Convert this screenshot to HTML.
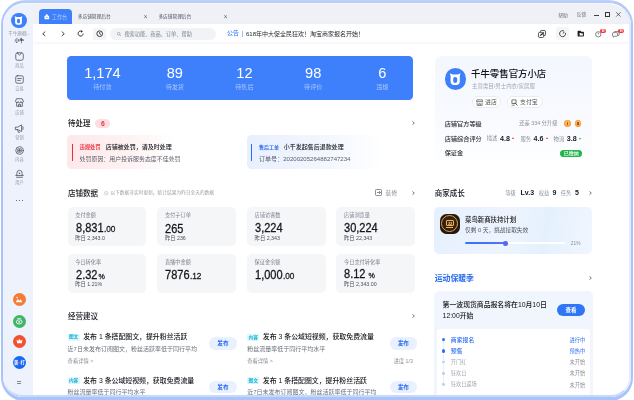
<!DOCTYPE html>
<html lang="zh-CN">
<head>
<meta charset="utf-8">
<title>千牛工作台</title>
<style>
*{box-sizing:border-box;margin:0;padding:0}
html,body{width:634px;height:400px;overflow:hidden;background:#fff}
body{font-family:"Liberation Sans","Noto Sans CJK SC",sans-serif;color:#1f2329;position:relative}
#frame{position:absolute;left:1px;top:0.3px;width:631.9px;height:401.2px;background:linear-gradient(180deg,#c0d6fd 0,#b4c9f8 3px,#abc5fb 40px,#a9c3fb 100%);border-radius:24.5px 24.5px 23px 23px}
#win{position:absolute;left:2.8px;top:2.8px;width:627.8px;height:394.2px;background:#fff;border-radius:22px 22px 20px 20px;overflow:hidden}
#pg{position:absolute;left:-2.8px;top:-2.8px;width:634px;height:400px;will-change:transform}
#glow{position:absolute;left:0;top:0;width:627.8px;height:394.2px;border-radius:22px 22px 20px 20px;border-right:2.8px solid #e4ecfd;border-bottom:2.2px solid #c6d8fc;border-top:1.2px solid rgba(255,255,255,.55);pointer-events:none}
#pg>*{position:absolute;white-space:nowrap}
.t{line-height:1;transform:translateY(-50%)}
.c{transform:translate(-50%,-50%)}
.r{transform:translate(-100%,-50%)}
svg{overflow:visible}
</style>
</head>
<body>
<div id="frame"></div>
<div id="win">
<div id="pg">
<div style="left:0px;top:0px;width:634px;height:23.8px;background:#eff1f6;"></div>
<div style="left:33px;top:23.8px;width:601px;height:18.6px;background:#fff;box-shadow:0 1.2px 3px rgba(40,60,110,.09)"></div>
<div style="left:0px;top:0px;width:33px;height:400px;background:#edf2fd;"></div>
<div style="left:11.4px;top:12.6px;width:15.6px;height:15.6px;border-radius:7.8px;background:#3e80fc;"></div>
<svg style="left:11.4px;top:13.2px" width="15.6" height="15.6" viewBox="0 0 21.2 21.2"><path d="M4.9 4.3 L7.6 5.6 H12.8 L15.500 4.300 L14.800 7 V12.600 A3.400 3.400 0 0 1 11.400 16 H9 A3.400 3.400 0 0 1 5.600 12.600 V7 Z" fill="#fff"/><rect x="8.200" y="7.900" width="4" height="6" rx="1.800" fill="#3e80fc"/></svg>
<div class="t c" style="left:19.3px;top:34.02px;font-size:4.7px;color:#8f95a2">千牛旗舰...</div>
<div class="t c" style="left:19.3px;top:41.1px;font-size:4.9px;color:#222;font-weight:500">小牛</div>
<div style="left:38.9px;top:9.1px;width:33.5px;height:14.7px;background:#3e80fc;border-radius:4px 4px 0 0"></div>
<svg style="left:43.6px;top:13.6px" width="5.6" height="6" viewBox="0 0 12 12"><path d="M3.6 3.4 V2.6 A2.4 2.4 0 0 1 8.4 2.6 V3.4 H10 A1 1 0 0 1 11 4.4 V10 A1 1 0 0 1 10 11 H2 A1 1 0 0 1 1 10 V4.4 A1 1 0 0 1 2 3.4 Z" fill="#fff"/><circle cx="6" cy="6.6" r="1.3" fill="#3e80fc"/></svg>
<div class="t" style="left:51.7px;top:17.79px;font-size:5.2px;color:#a9c5fb">工作台</div>
<div class="t" style="left:77.8px;top:16.7px;font-size:4.7px;color:#4a4f59">多店铺管理后台</div>
<div class="t c" style="left:145.5px;top:16.6px;font-size:6.4px;color:#666">×</div>
<div class="t" style="left:158.4px;top:16.7px;font-size:4.7px;color:#4a4f59">多店铺管理后台</div>
<div class="t c" style="left:225.7px;top:16.6px;font-size:6.4px;color:#666">×</div>
<div class="t c" style="left:563px;top:15.55px;font-size:4.8px;color:#6a6e77">帮助</div>
<div class="t c" style="left:581.5px;top:15.0px;font-size:4.8px;color:#6a6e77">反馈</div>
<div style="left:594.2px;top:14.6px;width:4.8px;height:0.65px;background:#444;"></div>
<div style="left:605.2px;top:12.2px;width:4.4px;height:4.9px;border:0.7px solid #333;border-radius:0.6px"></div>
<svg style="left:616.2px;top:12.3px" width="4.8" height="4.8" viewBox="0 0 10 10"><path d="M0.5 0.5 L9.5 9.5 M9.5 0.5 L0.5 9.5" stroke="#333" stroke-width="1.5" fill="none"/></svg>
<svg style="left:42.4px;top:30.8px" width="4" height="5.6" viewBox="0 0 8 11"><path d="M6.5 1 L1.5 5.5 L6.5 10" stroke="#222" stroke-width="1.7" fill="none"/></svg>
<svg style="left:61.2px;top:30.8px" width="4" height="5.6" viewBox="0 0 8 11"><path d="M1.5 1 L6.5 5.5 L1.5 10" stroke="#222" stroke-width="1.7" fill="none"/></svg>
<svg style="left:77.2px;top:29.9px" width="7.2" height="7.2" viewBox="0 0 12 12"><path d="M10.2 6 A4.2 4.2 0 1 1 8.2 2.4" stroke="#222" stroke-width="1.5" fill="none"/><path d="M6.6 0.4 L9.8 2.2 L7.2 4.4 Z" fill="#222"/></svg>
<div style="left:93.1px;top:27.6px;width:12.6px;height:12.6px;border-radius:2.5px;background:#f3f4f7;"></div>
<svg style="left:95.7px;top:30.2px" width="7.4" height="7.4" viewBox="0 0 12 12"><circle cx="6" cy="6" r="4.6" stroke="#222" stroke-width="1.4" fill="none"/><path d="M6 3.2 V6.2 L8 7.4" stroke="#222" stroke-width="1.3" fill="none"/></svg>
<div style="left:110px;top:27.6px;width:105.8px;height:12.4px;border-radius:6.2px;background:#f2f3f7;"></div>
<svg style="left:116.6px;top:31.6px" width="4.2" height="4.2" viewBox="0 0 10 10"><circle cx="4.2" cy="4.2" r="3.2" stroke="#777" stroke-width="1.2" fill="none"/><path d="M6.6 6.6 L9.4 9.4" stroke="#777" stroke-width="1.2"/></svg>
<div class="t" style="left:124.4px;top:34.69px;font-size:5.2px;color:#7c818c">搜索功能、商品、订单、帮助</div>
<div class="t" style="left:227px;top:33.04px;font-size:6px;color:#3e80fc;font-weight:500">公告</div>
<div style="left:242.4px;top:31px;width:0.7px;height:5.6px;background:#9bbcf8;"></div>
<div class="t" style="left:246px;top:33.6px;font-size:6px;color:#1f2329">618年中大促全民狂欢！淘宝商家报名开始！</div>
<svg style="left:537.9px;top:29.8px" width="8" height="8" viewBox="0 0 16 16"><rect x="4.6" y="0.9" width="10.5" height="10.5" rx="2.8" stroke="#222" stroke-width="1.5" fill="none"/><rect x="0.9" y="4.6" width="10.5" height="10.5" rx="2.8" stroke="#222" stroke-width="1.5" fill="#fff"/><path d="M3.4 12.4 L5.4 8.6 L12.6 3.4 L9 9.6 Z" fill="#222"/></svg>
<div style="left:555.9px;top:27.4px;width:12.8px;height:12.8px;border-radius:2.5px;background:#f4f5f7;"></div>
<svg style="left:558.8px;top:30.3px" width="7.2" height="7.2" viewBox="0 0 12 12"><path d="M8.4 1.7 A5 5 0 1 0 10.9 5" stroke="#222" stroke-width="1.4" fill="none"/><path d="M6.4 5.6 L9.2 3.6" stroke="#222" stroke-width="1.5"/></svg>
<svg style="left:576.8px;top:29.9px" width="7.4" height="7.2" viewBox="0 0 13 12"><path d="M1 2 A1.2 1.2 0 0 1 2.2 0.8 H6 L7.6 2.6 H11 A1.2 1.2 0 0 1 12.2 3.8 V10 A1.2 1.2 0 0 1 11 11.2 H2.2 A1.2 1.2 0 0 1 1 10 Z" fill="#222"/><path d="M4.6 4.8 H6.6 L7.6 5.8 H10.4 V9.400 H4.6 Z" fill="#fff"/></svg>
<svg style="left:595px;top:30.8px" width="6.6" height="6.6" viewBox="0 0 12 12"><circle cx="6" cy="6" r="4.8" stroke="#444" stroke-width="1.2" fill="none"/><path d="M6 3 V6.400" stroke="#444" stroke-width="1.2"/></svg>
<div style="left:600.2px;top:29px;width:5.8px;height:3.8px;border-radius:1.9px;background:#f0323c;"></div>
<div class="t c" style="left:603.1px;top:32.28px;font-size:2.6px;color:#fff;font-weight:700">99</div>
<svg style="left:612.4px;top:30.8px" width="7.6" height="6.6" viewBox="0 0 14 12"><path d="M4 1 H12 A1.2 1.2 0 0 1 13.2 2.2 V7 A1.2 1.2 0 0 1 12 8.2 H11" stroke="#444" stroke-width="1.2" fill="none"/><path d="M1 4.2 A1.2 1.2 0 0 1 2.2 3 H9 A1.2 1.2 0 0 1 10.2 4.2 V8.4 A1.2 1.2 0 0 1 9 9.6 H4.6 L2.6 11.4 V9.6 H2.2 A1.2 1.2 0 0 1 1 8.4 Z" stroke="#444" stroke-width="1.2" fill="none"/></svg>
<div style="left:618.4px;top:29px;width:5.8px;height:3.8px;border-radius:1.9px;background:#f0323c;"></div>
<div class="t c" style="left:621.3px;top:32.28px;font-size:2.6px;color:#fff;font-weight:700">99</div>
<div style="left:67.1px;top:55.7px;width:346px;height:44px;border-radius:4.3px;background:#3e80fc;"></div>
<div class="t c" style="left:102.4px;top:73.2px;font-size:14.6px;color:#fff">1,174</div>
<div class="t c" style="left:102.4px;top:87.2px;font-size:6.1px;color:#a9c6fb">待付款</div>
<div class="t c" style="left:174.8px;top:73.2px;font-size:14.6px;color:#fff">89</div>
<div class="t c" style="left:174.8px;top:87.2px;font-size:6.1px;color:#a9c6fb">待发货</div>
<div class="t c" style="left:244.4px;top:73.2px;font-size:14.6px;color:#fff">12</div>
<div class="t c" style="left:244.4px;top:87.2px;font-size:6.1px;color:#a9c6fb">待售后</div>
<div class="t c" style="left:313.2px;top:73.2px;font-size:14.6px;color:#fff">98</div>
<div class="t c" style="left:313.2px;top:87.2px;font-size:6.1px;color:#a9c6fb">待评价</div>
<div class="t c" style="left:382.3px;top:73.2px;font-size:14.6px;color:#fff">6</div>
<div class="t c" style="left:382.3px;top:87.2px;font-size:6.1px;color:#a9c6fb">违规</div>
<div class="t" style="left:68px;top:124.32px;font-size:7.5px;color:#15181d;font-weight:500">待处理</div>
<div style="left:95.4px;top:119px;width:14.8px;height:8.8px;border-radius:4.4px;background:#fddde2;"></div>
<div class="t c" style="left:102.8px;top:123.5px;font-size:6.8px;color:#e8323f;font-weight:700">6</div>
<svg style="left:411.6px;top:121.1px" width="2.8" height="4.2" viewBox="0 0 6 9"><path d="M1 1 L5 4.5 L1 8" stroke="#333" stroke-width="1.4" fill="none"/></svg>
<div style="left:67.2px;top:135.4px;width:168.4px;height:34px;border-radius:4.5px;background:linear-gradient(90deg,#fde8ea 0%,#fef2f3 36%,#ffffff 64%);"></div>
<div style="left:72.1px;top:144.2px;width:1.2px;height:16.8px;background:#ee2d3a;"></div>
<div class="t" style="left:79.6px;top:148.39px;font-size:5.25px;color:#ee3a45;font-weight:700">违规处罚</div>
<div class="t" style="left:105.8px;top:147.2px;font-size:6px;color:#15181d;font-weight:500">店铺被处罚，请及时处理</div>
<div class="t" style="left:79.6px;top:160.46px;font-size:5.95px;color:#5b606b">处罚原因：用户投诉服务态度不佳处罚</div>
<div style="left:246.6px;top:135.4px;width:166.8px;height:34px;border-radius:4.5px;background:linear-gradient(90deg,#e8effe 0%,#f2f6fe 45%,#ffffff 82%);"></div>
<div style="left:251.1px;top:144.2px;width:1.2px;height:16.8px;background:#2f6ff2;"></div>
<div class="t" style="left:259px;top:147.2px;font-size:5px;color:#2f6ff2;font-weight:700">售后工单</div>
<div class="t" style="left:283.8px;top:147.2px;font-size:6px;color:#15181d;font-weight:500">小千发起售后退款处理</div>
<div class="t" style="left:259px;top:159.2px;font-size:6.05px;color:#5b606b">订单号：20200205264882747234</div>
<div class="t" style="left:68px;top:193.89px;font-size:7.5px;color:#15181d;font-weight:500">店铺数据</div>
<svg style="left:104.2px;top:190.6px" width="4.4" height="4.4" viewBox="0 0 10 10"><circle cx="5" cy="5" r="4" stroke="#9a9fa8" stroke-width="0.9" fill="none"/><path d="M5 4.4 V7.4 M5 2.6 V3.4" stroke="#9a9fa8" stroke-width="0.9"/></svg>
<div class="t" style="left:110.4px;top:192.9px;font-size:4.73px;color:#9a9fa8">以下数据非实时更新，统计结果为昨日全天的数据</div>
<div style="left:375.4px;top:189.2px;width:7px;height:7px;border:0.7px solid #8a8f99;border-radius:1.2px"></div>
<div style="left:377.2px;top:192.35px;width:3.4px;height:0.7px;background:#8a8f99;"></div>
<div style="left:378.55px;top:191px;width:0.7px;height:3.4px;background:#8a8f99;"></div>
<div class="t" style="left:385.6px;top:193.59px;font-size:5.8px;color:#8a8f99">装修</div>
<svg style="left:411.6px;top:190.7px" width="2.8" height="4.2" viewBox="0 0 6 9"><path d="M1 1 L5 4.5 L1 8" stroke="#333" stroke-width="1.4" fill="none"/></svg>
<div style="left:67.6px;top:207px;width:78.6px;height:39.3px;border-radius:5px;background:#f5f6f8;"></div>
<div class="t" style="left:75.2px;top:215.5px;font-size:5.2px;color:#7a7f8a">支付金额</div>
<div class="t" style="left:75.5px;top:228.2px;font-size:12.4px;color:#15181d;-webkit-text-stroke:0.3px #15181d;transform:translateY(-50%) scaleX(.89);transform-origin:0 50%">8,831<span style="font-size:9.3px;margin-left:0.4px;color:#20242b">.00</span></div>
<div class="t" style="left:75.2px;top:238.86px;font-size:5.3px;color:#4a4f59">昨日 2,343.0</div>
<div style="left:157.3px;top:207px;width:78.6px;height:39.3px;border-radius:5px;background:#f5f6f8;"></div>
<div class="t" style="left:164.9px;top:215.5px;font-size:5.2px;color:#7a7f8a">支付子订单</div>
<div class="t" style="left:165.2px;top:228.83px;font-size:12.4px;color:#15181d;-webkit-text-stroke:0.3px #15181d;transform:translateY(-50%) scaleX(.89);transform-origin:0 50%">265</div>
<div class="t" style="left:164.9px;top:238.94px;font-size:5.3px;color:#4a4f59">昨日 236</div>
<div style="left:247px;top:207px;width:78.6px;height:39.3px;border-radius:5px;background:#f5f6f8;"></div>
<div class="t" style="left:254.6px;top:215.5px;font-size:5.2px;color:#7a7f8a">店铺访客数</div>
<div class="t" style="left:254.9px;top:228.2px;font-size:12.4px;color:#15181d;-webkit-text-stroke:0.3px #15181d;transform:translateY(-50%) scaleX(.89);transform-origin:0 50%">3,224</div>
<div class="t" style="left:254.6px;top:238.88px;font-size:5.3px;color:#4a4f59">昨日 2,343</div>
<div style="left:336.4px;top:207px;width:78.6px;height:39.3px;border-radius:5px;background:#f5f6f8;"></div>
<div class="t" style="left:344.0px;top:215.5px;font-size:5.2px;color:#7a7f8a">店铺浏览量</div>
<div class="t" style="left:344.3px;top:228.2px;font-size:12.4px;color:#15181d;-webkit-text-stroke:0.3px #15181d;transform:translateY(-50%) scaleX(.89);transform-origin:0 50%">30,224</div>
<div class="t" style="left:344.0px;top:238.86px;font-size:5.3px;color:#4a4f59">昨日 22,343</div>
<div style="left:67.6px;top:253.5px;width:78.6px;height:39.3px;border-radius:5px;background:#f5f6f8;"></div>
<div class="t" style="left:75.2px;top:263.0px;font-size:5.2px;color:#7a7f8a">今日转化率</div>
<div class="t" style="left:75.5px;top:274.7px;font-size:12.4px;color:#15181d;-webkit-text-stroke:0.3px #15181d;transform:translateY(-50%) scaleX(.89);transform-origin:0 50%">2.32<span style="font-size:8px;margin-left:1.2px;color:#20242b">%</span></div>
<div class="t" style="left:75.2px;top:285.42px;font-size:5.3px;color:#4a4f59">昨日 1.21%</div>
<div style="left:157.3px;top:253.5px;width:78.6px;height:39.3px;border-radius:5px;background:#f5f6f8;"></div>
<div class="t" style="left:164.9px;top:263.01px;font-size:5.2px;color:#7a7f8a">直播中金额</div>
<div class="t" style="left:165.2px;top:275.1px;font-size:12.4px;color:#15181d;-webkit-text-stroke:0.3px #15181d;transform:translateY(-50%) scaleX(.89);transform-origin:0 50%">7876<span style="font-size:9.3px;margin-left:0.4px;color:#20242b">.12</span></div>
<div style="left:247px;top:253.5px;width:78.6px;height:39.3px;border-radius:5px;background:#f5f6f8;"></div>
<div class="t" style="left:254.6px;top:262.88px;font-size:5.2px;color:#7a7f8a">保证金余额</div>
<div class="t" style="left:254.9px;top:275.1px;font-size:12.4px;color:#15181d;-webkit-text-stroke:0.3px #15181d;transform:translateY(-50%) scaleX(.89);transform-origin:0 50%">1,000<span style="font-size:9.3px;margin-left:0.4px;color:#20242b">.00</span></div>
<div style="left:336.4px;top:253.5px;width:78.6px;height:39.3px;border-radius:5px;background:#f5f6f8;"></div>
<div class="t" style="left:344.0px;top:263.0px;font-size:5.2px;color:#7a7f8a">今日支付转化率</div>
<div class="t" style="left:344.3px;top:274.16px;font-size:12.4px;color:#15181d;-webkit-text-stroke:0.3px #15181d;transform:translateY(-50%) scaleX(.89);transform-origin:0 50%">8.12<span style="font-size:8px;margin-left:3.4px;color:#20242b">%</span></div>
<div class="t" style="left:344.0px;top:285.42px;font-size:5.3px;color:#4a4f59">昨日 2,343.00</div>
<div class="t" style="left:68px;top:316.5px;font-size:7.5px;color:#15181d;font-weight:500">经营建议</div>
<svg style="left:411.6px;top:314.4px" width="2.8" height="4.2" viewBox="0 0 6 9"><path d="M1 1 L5 4.5 L1 8" stroke="#333" stroke-width="1.4" fill="none"/></svg>
<div style="left:67.6px;top:333.5px;width:12px;height:7px;border-radius:1px;background:#dff6fb;"></div>
<div class="t c" style="left:73.6px;top:337.1px;font-size:4.7px;color:#19b5d8;font-weight:700">图文</div>
<div class="t" style="left:83.2px;top:337.0px;font-size:6.9px;color:#15181d;font-weight:500">发布 1 条搭配图文，提升粉丝活跃</div>
<div class="t" style="left:67.6px;top:349.2px;font-size:6px;color:#6b707b">近7日未发布订阅图文，粉丝活跃率低于同行平均</div>
<div class="t" style="left:67.6px;top:362.01px;font-size:5.3px;color:#8a8f99">查看详情 &gt;</div>
<div style="left:209.2px;top:337.3px;width:27.4px;height:12.4px;border-radius:6.2px;background:#e9f0fe;"></div>
<div class="t c" style="left:222.9px;top:343.6px;font-size:5.6px;color:#2f6ff2;font-weight:700">发布</div>
<div style="left:247.2px;top:333.5px;width:12px;height:7px;border-radius:1px;background:#dff6fb;"></div>
<div class="t c" style="left:253.2px;top:337.67px;font-size:4.7px;color:#19b5d8;font-weight:700">内容</div>
<div class="t" style="left:262.8px;top:337.0px;font-size:6.9px;color:#15181d;font-weight:500">发布 3 条公域短视频，获取免费流量</div>
<div class="t" style="left:247.2px;top:349.2px;font-size:6px;color:#6b707b">粉丝流量率低于同行平均水平</div>
<div class="t" style="left:247.2px;top:362.01px;font-size:5.3px;color:#8a8f99">查看详情 &gt;</div>
<div style="left:389.6px;top:337.3px;width:27.4px;height:12.4px;border-radius:6.2px;background:#e9f0fe;"></div>
<div class="t c" style="left:403.3px;top:343.6px;font-size:5.6px;color:#2f6ff2;font-weight:700">发布</div>
<div class="t c" style="left:403.3px;top:361.79px;font-size:5.2px;color:#8a8f99">进度 1/3</div>
<div style="left:67.6px;top:376.9px;width:12px;height:7px;border-radius:1px;background:#dff6fb;"></div>
<div class="t c" style="left:73.6px;top:380.5px;font-size:4.7px;color:#19b5d8;font-weight:700">内容</div>
<div class="t" style="left:83.2px;top:381.25px;font-size:6.9px;color:#15181d;font-weight:500">发布 3 条公域短视频，获取免费流量</div>
<div class="t" style="left:67.6px;top:392.14px;font-size:6px;color:#6b707b">粉丝流量率低于同行平均水平</div>
<div style="left:209.2px;top:380.7px;width:27.4px;height:12.4px;border-radius:6.2px;background:#e9f0fe;"></div>
<div class="t c" style="left:222.9px;top:387.93px;font-size:5.6px;color:#2f6ff2;font-weight:700">发布</div>
<div style="left:247.2px;top:376.9px;width:12px;height:7px;border-radius:1px;background:#dff6fb;"></div>
<div class="t c" style="left:253.2px;top:380.5px;font-size:4.7px;color:#19b5d8;font-weight:700">图文</div>
<div class="t" style="left:262.8px;top:381.27px;font-size:6.9px;color:#15181d;font-weight:500">发布 1 条搭配图文，提升粉丝活跃</div>
<div class="t" style="left:247.2px;top:392.11px;font-size:6px;color:#6b707b">近7日未发布订阅图文，粉丝活跃率低于同行平均</div>
<div style="left:389.6px;top:380.7px;width:27.4px;height:12.4px;border-radius:6.2px;background:#e9f0fe;"></div>
<div class="t c" style="left:403.3px;top:387.93px;font-size:5.6px;color:#2f6ff2;font-weight:700">发布</div>
<div style="left:434.6px;top:56px;width:157.6px;height:109.6px;border-radius:6px;background:linear-gradient(180deg,#f3f7fe 0%,#f8fafe 55%,#ffffff 100%);"></div>
<div style="left:444.8px;top:68.4px;width:21.2px;height:21.2px;border-radius:10.6px;background:#3e80fc;"></div>
<svg style="left:444.8px;top:69.3px" width="21.2" height="21.2" viewBox="0 0 21.2 21.2"><path d="M4.9 4.3 L7.6 5.6 H12.8 L15.500 4.300 L14.800 7 V12.600 A3.400 3.400 0 0 1 11.400 16 H9 A3.400 3.400 0 0 1 5.600 12.600 V7 Z" fill="#fff"/><rect x="8.200" y="7.900" width="4" height="6" rx="1.800" fill="#3e80fc"/></svg>
<div class="t" style="left:471px;top:73.6px;font-size:9.42px;color:#111;font-weight:500">千牛零售官方小店</div>
<div class="t" style="left:472px;top:86.96px;font-size:5.45px;color:#a3a7b0">主营类目/男士内衣/家居服</div>
<div style="left:471.8px;top:96px;width:29.2px;height:12.4px;border-radius:6.4px;border:0.6px solid #e9ecf1;background:#fff"></div>
<svg style="left:476.2px;top:98.7px" width="7.2" height="7.2" viewBox="0 0 12 12"><path d="M1.4 1.4 H10.6 L11.2 4.4 H0.8 Z M1.800 6 V10.600 H10.200 V6" stroke="#444" stroke-width="1.100" fill="none"/><path d="M4.600 10.600 V7.800 H7.400 V10.600" stroke="#444" stroke-width="1" fill="none"/></svg>
<div class="t" style="left:485px;top:103.42px;font-size:5.9px;color:#555">进店</div>
<div style="left:506.5px;top:96px;width:36.2px;height:12.4px;border-radius:6.4px;border:0.6px solid #e9ecf1;background:#fff"></div>
<svg style="left:511.4px;top:98.7px" width="7.2" height="7.2" viewBox="0 0 12 12"><path d="M1.500 1.500 H8.500 V7.500 H1.500 Z" stroke="#444" stroke-width="1.200" fill="none"/><path d="M6 6 L10.800 10.800" stroke="#444" stroke-width="1.500"/><path d="M1 10.400 H6.400" stroke="#444" stroke-width="1.100"/></svg>
<div class="t" style="left:520px;top:103.12px;font-size:5.9px;color:#555">支付宝</div>
<div class="t" style="left:444.7px;top:123.6px;font-size:6.2px;color:#1f2329;font-weight:500">店铺官方等级</div>
<div class="t" style="left:519.2px;top:123.6px;font-size:5.3px;color:#8a8f99">还差 334 分升级</div>
<div style="left:564.2px;top:120.2px;width:6.8px;height:6.8px;border-radius:3.4px;background:radial-gradient(circle at 50% 45%,#ffd98a 0%,#f6a13a 55%,#e9822a 100%);"></div>
<div style="left:567.0px;top:121.6px;width:1.2px;height:3.6px;border-radius:0.5px;background:#b5481a;"></div>
<div style="left:574.6px;top:120.2px;width:6.8px;height:6.8px;border-radius:3.4px;background:radial-gradient(circle at 50% 45%,#ffd98a 0%,#f6a13a 55%,#e9822a 100%);"></div>
<div style="left:577.4px;top:121.6px;width:1.2px;height:3.6px;border-radius:0.5px;background:#b5481a;"></div>
<div class="t" style="left:444.7px;top:138.6px;font-size:6.2px;color:#1f2329;font-weight:500">店铺综合评分</div>
<div class="t" style="left:486.8px;top:138.6px;font-size:5.3px;color:#8a8f99">描述</div>
<div class="t" style="left:500.0px;top:139.8px;font-size:7.1px;color:#15181d;font-weight:700">4.8</div>
<div style="left:512.0px;top:137.4px;border-left:1.4px solid transparent;border-right:1.4px solid transparent;border-bottom:2.4px solid #f0323c;width:0;height:0"></div>
<div class="t" style="left:520.4px;top:139.79px;font-size:5.3px;color:#8a8f99">服务</div>
<div class="t" style="left:533.6px;top:139.83px;font-size:7.1px;color:#15181d;font-weight:700">4.6</div>
<div style="left:545.6px;top:137.4px;border-left:1.4px solid transparent;border-right:1.4px solid transparent;border-bottom:2.4px solid #f0323c;width:0;height:0"></div>
<div class="t" style="left:553.6px;top:139.64px;font-size:5.3px;color:#8a8f99">物流</div>
<div class="t" style="left:566.8px;top:139.78px;font-size:7.1px;color:#15181d;font-weight:700">3.8</div>
<div style="left:578.8px;top:137.6px;border-left:1.4px solid transparent;border-right:1.4px solid transparent;border-top:2.4px solid #21b84a;width:0;height:0"></div>
<div class="t" style="left:444.7px;top:153.2px;font-size:6.2px;color:#1f2329;font-weight:500">保证金</div>
<div style="left:560.4px;top:149.7px;width:21.8px;height:7px;border-radius:3.5px;background:#1fb648;"></div>
<div class="t c" style="left:571.3px;top:153.3px;font-size:5px;color:#fff;font-weight:500">已缴纳</div>
<div class="t" style="left:434.8px;top:193.55px;font-size:7.5px;color:#15181d;font-weight:500">商家成长</div>
<div class="t" style="left:505.4px;top:193.86px;font-size:5.2px;color:#8a8f99">等级</div>
<div class="t" style="left:520.6px;top:191.5px;font-size:7px;color:#15181d;font-weight:700">Lv.3</div>
<div class="t" style="left:538.8px;top:193.85px;font-size:5.2px;color:#8a8f99">权益</div>
<div class="t" style="left:552.6px;top:191.94px;font-size:7px;color:#15181d;font-weight:700">9</div>
<div class="t" style="left:560.8px;top:193.94px;font-size:5.2px;color:#8a8f99">任务</div>
<div class="t" style="left:575px;top:192.02px;font-size:7px;color:#15181d;font-weight:700">5</div>
<svg style="left:588.8px;top:190.7px" width="2.8" height="4.2" viewBox="0 0 6 9"><path d="M1 1 L5 4.5 L1 8" stroke="#333" stroke-width="1.4" fill="none"/></svg>
<div style="left:434px;top:207.2px;width:158.4px;height:47.2px;border-radius:5px;background:linear-gradient(100deg,#e6f0fe 0%,#eef4fe 45%,#e4f1fd 70%,#f1f6fe 100%);"></div>
<div style="left:439.6px;top:213.6px;width:20.6px;height:20.6px;border-radius:6.5px;background:radial-gradient(circle at 50% 45%,#4a3216 0%,#2a1c0c 55%,#17100a 100%)"></div>
<div style="left:441.4px;top:215.4px;width:17px;height:17px;border-radius:50%;border:1.3px solid #e0a050"></div>
<div style="left:445.8px;top:220.2px;width:8.2px;height:6px;border-radius:1px;border:0.8px solid #f0b060"></div>
<div style="left:446.4px;top:227.4px;width:7px;height:0.8px;background:#f0b060;"></div>
<div class="t c" style="left:450px;top:224.03px;font-size:4.2px;color:#f6c070;font-weight:700;letter-spacing:-0.3px">22</div>
<div class="t" style="left:465px;top:219.74px;font-size:6.4px;color:#111;font-weight:500">菜鸟新商扶持计划</div>
<div class="t" style="left:465px;top:231.35px;font-size:5.7px;color:#555a64">仅剩 0 天，挑战接取失效</div>
<div style="left:465px;top:242.4px;width:100px;height:2.1px;border-radius:1.05px;background:#fff;"></div>
<div style="left:465px;top:242.4px;width:40.5px;height:2.1px;border-radius:1.05px;background:linear-gradient(90deg,#2f76fb,#5a6ff5);"></div>
<div style="left:503.2px;top:241.15px;width:4.6px;height:4.6px;border-radius:2.3px;background:#5468f2;"></div>
<div class="t" style="left:570.8px;top:244.49px;font-size:4.8px;color:#8a8f99">21%</div>
<div class="t" style="left:434.8px;top:279.35px;font-size:7.9px;color:#2a6cf0;font-weight:700;letter-spacing:-0.1px">运动保暖季</div>
<svg style="left:588.8px;top:276.2px" width="2.8" height="4.2" viewBox="0 0 6 9"><path d="M1 1 L5 4.5 L1 8" stroke="#333" stroke-width="1.4" fill="none"/></svg>
<div style="left:434.2px;top:291.4px;width:158.4px;height:120px;border-radius:5px;background:#f0f5fe;"></div>
<div class="t" style="left:442.6px;top:304.6px;font-size:6.85px;color:#111;font-weight:500">第一波现货商品报名将在10月10日</div>
<div class="t" style="left:442.6px;top:315.82px;font-size:6.85px;color:#111;font-weight:500">12:00开始</div>
<div style="left:556.8px;top:303.8px;width:28.4px;height:12px;border-radius:6px;background:#2f76f6;"></div>
<div class="t c" style="left:571px;top:310.84px;font-size:5.5px;color:#fff;font-weight:700">查看</div>
<div style="left:436.8px;top:329px;width:153.4px;height:80px;border-radius:3px;background:#fff;"></div>
<div style="left:443px;top:340px;width:0.5px;height:44.5px;background:#e6edfc;"></div>
<div style="left:441.6px;top:338.1px;width:3.2px;height:3.2px;border-radius:1.6px;background:#2f6ff2;"></div>
<div class="t" style="left:450.8px;top:340.83px;font-size:5.9px;color:#2f6ff2;font-weight:500">商家报名</div>
<div class="t r" style="left:585.2px;top:340.51px;font-size:5.2px;color:#2f6ff2">进行中</div>
<div style="left:441.6px;top:349.4px;width:3.2px;height:3.2px;border-radius:1.6px;background:#2f6ff2;"></div>
<div class="t" style="left:450.8px;top:352.11px;font-size:5.9px;color:#2f6ff2;font-weight:500">预售</div>
<div class="t r" style="left:585.2px;top:352.1px;font-size:5.2px;color:#2f6ff2">预热中</div>
<div style="left:441.8px;top:360.7px;width:2.8px;height:2.8px;border-radius:1.4px;background:#b9cdf8;"></div>
<div class="t" style="left:450.8px;top:363.46px;font-size:5.2px;color:#a0a5ae">开门红</div>
<div class="t r" style="left:585.2px;top:363.25px;font-size:5.2px;color:#8a8f99">未开始</div>
<div style="left:441.8px;top:371.9px;width:2.8px;height:2.8px;border-radius:1.4px;background:#b9cdf8;"></div>
<div class="t" style="left:450.8px;top:374.39px;font-size:5.2px;color:#a0a5ae">狂欢日</div>
<div class="t r" style="left:585.2px;top:374.25px;font-size:5.2px;color:#8a8f99">未开始</div>
<div style="left:441.8px;top:383.2px;width:2.8px;height:2.8px;border-radius:1.4px;background:#b9cdf8;"></div>
<div class="t" style="left:450.8px;top:384.6px;font-size:5.2px;color:#a0a5ae">狂欢日返场</div>
<div class="t r" style="left:585.2px;top:385.63px;font-size:5.2px;color:#8a8f99">未开始</div>
<svg style="left:14.9px;top:52.1px" width="9" height="9" viewBox="0 0 12 12"><rect x="1" y="1" width="10" height="10" rx="2.4" stroke="#4a4d55" stroke-width="1.05" fill="none" stroke-linejoin="round" stroke-linecap="round"/><path d="M3.6 1.4 Q6 7.2 8.4 1.4" stroke="#4a4d55" stroke-width="1.05" fill="none" stroke-linejoin="round" stroke-linecap="round"/></svg>
<div class="t c" style="left:19.4px;top:65.9px;font-size:4.2px;color:#9a9ca3">商品</div>
<svg style="left:14.9px;top:75.4px" width="9" height="9" viewBox="0 0 12 12"><rect x="1" y="1" width="10" height="10" rx="2" stroke="#4a4d55" stroke-width="1.05" fill="none" stroke-linejoin="round" stroke-linecap="round"/><path d="M3.6 4.6 H8.4 M3.6 7.2 H7" stroke="#4a4d55" stroke-width="1.05" fill="none" stroke-linejoin="round" stroke-linecap="round"/></svg>
<div class="t c" style="left:19.4px;top:89.2px;font-size:4.2px;color:#9a9ca3">交易</div>
<svg style="left:14.9px;top:98.4px" width="9" height="9" viewBox="0 0 12 12"><path d="M2.4 1 H9.6 L11.2 4.200 A1.700 1.700 0 0 1 7.800 4.700 A1.800 1.800 0 0 1 4.200 4.700 A1.700 1.700 0 0 1 0.800 4.200 Z" stroke="#4a4d55" stroke-width="1.05" fill="none" stroke-linejoin="round" stroke-linecap="round"/><path d="M2.200 6.600 V11 H9.800 V6.600" stroke="#4a4d55" stroke-width="1.05" fill="none" stroke-linejoin="round" stroke-linecap="round"/><path d="M4.800 11 V8.400 H7.200 V11" stroke="#4a4d55" stroke-width="1.05" fill="none" stroke-linejoin="round" stroke-linecap="round"/></svg>
<div class="t c" style="left:19.4px;top:112.9px;font-size:4.2px;color:#9a9ca3">店铺</div>
<svg style="left:14.9px;top:123.5px" width="9" height="9" viewBox="0 0 12 12"><path d="M1 4.200 H3.600 L8.800 1.200 V10 L3.600 7.400 H1 Z" stroke="#4a4d55" stroke-width="1.05" fill="none" stroke-linejoin="round" stroke-linecap="round"/><path d="M3.400 7.600 L4.400 11 H6.200" stroke="#4a4d55" stroke-width="1.05" fill="none" stroke-linejoin="round" stroke-linecap="round"/><path d="M10.600 3.800 V7.400" stroke="#4a4d55" stroke-width="1.05" fill="none" stroke-linejoin="round" stroke-linecap="round"/></svg>
<div class="t c" style="left:19.4px;top:137.97px;font-size:4.2px;color:#9a9ca3">营销</div>
<svg style="left:14.9px;top:146.1px" width="9" height="9" viewBox="0 0 12 12"><circle cx="6" cy="6" r="5" stroke="#4a4d55" stroke-width="1.05" fill="none" stroke-linejoin="round" stroke-linecap="round"/><path d="M3.600 3.800 H8.400 V8.200 H3.600 Z M3.600 6 H8.400 M6 3.800 V8.200" stroke="#4a4d55" stroke-width="0.9" fill="none"/></svg>
<div class="t c" style="left:19.4px;top:160.0px;font-size:4.2px;color:#9a9ca3">内容</div>
<svg style="left:14.9px;top:169.1px" width="9" height="9" viewBox="0 0 12 12"><path d="M2.400 8.200 V5.800 A3.600 4 0 0 1 9.600 5.800 V8.200" stroke="#4a4d55" stroke-width="1.05" fill="none" stroke-linejoin="round" stroke-linecap="round"/><path d="M1 8.600 H11 M2 11 H10" stroke="#4a4d55" stroke-width="1.05" fill="none" stroke-linejoin="round" stroke-linecap="round"/><circle cx="6" cy="5.600" r="1" fill="#4a4d55"/></svg>
<div class="t c" style="left:19.4px;top:182.7px;font-size:4.2px;color:#9a9ca3">用户</div>
<div style="left:15.8px;top:199.5px;width:1.3px;height:1.3px;border-radius:0.65px;background:#444;"></div>
<div style="left:18.7px;top:199.5px;width:1.3px;height:1.3px;border-radius:0.65px;background:#444;"></div>
<div style="left:21.6px;top:199.5px;width:1.3px;height:1.3px;border-radius:0.65px;background:#444;"></div>
<div style="left:12.9px;top:293.1px;width:13px;height:13px;border-radius:6.5px;background:#f57a35;"></div>
<svg style="left:15.4px;top:296px" width="8" height="7" viewBox="0 0 12 10"><path d="M1 9 L4 4.4 L6.4 7 L8.6 4.8 L11 9 Z" fill="#fff"/><circle cx="3" cy="2" r="1.1" fill="#fff"/></svg>
<div style="left:12.9px;top:314.5px;width:13px;height:13px;border-radius:6.5px;background:#3fb568;"></div>
<svg style="left:15.2px;top:316.8px" width="8.4" height="8.4" viewBox="0 0 12 12"><ellipse cx="6" cy="7" rx="4.2" ry="3" stroke="#fff" stroke-width="1.2" fill="none"/><circle cx="6" cy="7" r="1.2" fill="#fff"/><path d="M3 2.8 Q6 0.8 9 2.8" stroke="#fff" stroke-width="1.1" fill="none"/></svg>
<div style="left:12.9px;top:334.8px;width:13px;height:13px;border-radius:6.5px;background:#f4502f;"></div>
<svg style="left:15.9px;top:338.2px" width="7" height="6" viewBox="0 0 12 10"><path d="M1 2.6 L3.8 5 L6 1 L8.2 5 L11 2.6 L10 9 H2 Z" fill="#fff"/></svg>
<div style="left:12.9px;top:355.8px;width:13px;height:13px;border-radius:6.5px;background:#1668f5;"></div>
<div class="t c" style="left:19.4px;top:363.31px;font-size:4.4px;color:#fff;font-weight:700;letter-spacing:-0.2px">美<span style="color:#ff5a4a">×</span>打</div>
<div style="left:17.3px;top:380.9px;width:4.2px;height:0.7px;background:#888;"></div>
<div style="left:17.3px;top:382.9px;width:4.2px;height:0.7px;background:#888;"></div>
</div>
<div id="glow"></div>
</div>
</body>
</html>
